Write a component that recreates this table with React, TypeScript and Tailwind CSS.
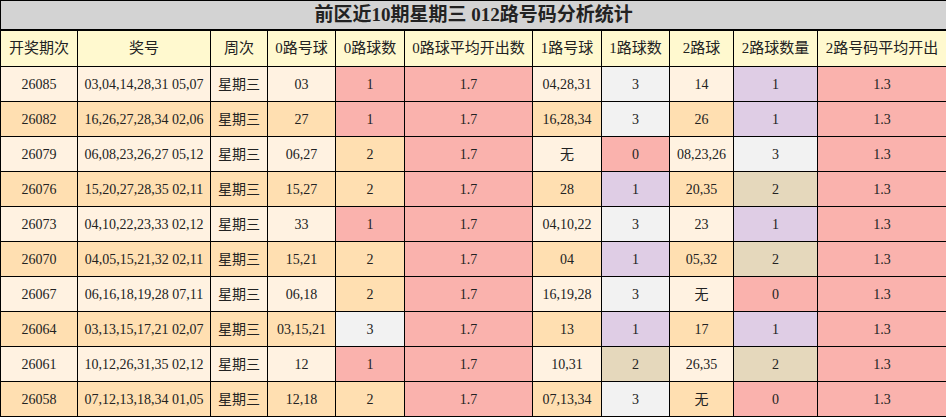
const rows: [string, string, string, number, string, number, string, number][] = [
  ["26085", "03,04,14,28,31 05,07", "03", 1, "04,28,31", 3, "14", 1],
  ["26082", "16,26,27,28,34 02,06", "27", 1, "16,28,34", 3, "26", 1],
  ["26079", "06,08,23,26,27 05,12", "06,27", 2, "无", 0, "08,23,26", 3],
  ["26076", "15,20,27,28,35 02,11", "15,27", 2, "28", 1, "20,35", 2],
  ["26073", "04,10,22,23,33 02,12", "33", 1, "04,10,22", 3, "23", 1],
  ["26070", "04,05,15,21,32 02,11", "15,21", 2, "04", 1, "05,32", 2],
  ["26067", "06,16,18,19,28 07,11", "06,18", 2, "16,19,28", 3, "无", 0],
  ["26064", "03,13,15,17,21 02,07", "03,15,21", 3, "13", 1, "17", 1],
  ["26061", "10,12,26,31,35 02,12", "12", 1, "10,31", 2, "26,35", 2],
  ["26058", "07,12,13,18,34 01,05", "12,18", 2, "07,13,34", 3, "无", 0],
];

const headers = [
  "开奖期次",
  "奖号",
  "周次",
  "0路号球",
  "0路球数",
  "0路球平均开出数",
  "1路号球",
  "1路球数",
  "2路球",
  "2路球数量",
  "2路号码平均开出",
];

const widths = [
  "w-[77px]",
  "w-[133px]",
  "w-[57px]",
  "w-[68px]",
  "w-[69px]",
  "w-[128px]",
  "w-[69px]",
  "w-[68px]",
  "w-[64px]",
  "w-[84px]",
  "w-[129px]",
];

// zero-road count colours differ from the 1/2 road ones
const zeroColor: Record<number, string> = {
  1: "bg-[#fab2ad]",
  2: "bg-[#ffdfb1]",
  3: "bg-[#f2f2f2]",
};

const countColor: Record<number, string> = {
  0: "bg-[#fab2ad]",
  1: "bg-[#dfcde5]",
  2: "bg-[#e5d8bc]",
  3: "bg-[#f2f2f2]",
};

const cell = "border border-black text-center align-middle p-0";

export default function App() {
  return (
    <div className="w-[946px] h-[417px] bg-white overflow-hidden">
      <table
        className="w-[946px] table-fixed border-collapse text-[#222]"
        style={{ fontFamily: '"Liberation Serif", "Noto Sans CJK SC", serif' }}
      >
        <colgroup>
          {widths.map((w, i) => (
            <col key={i} className={w} />
          ))}
        </colgroup>
        <thead>
          <tr className="h-[29px]">
            <th
              colSpan={11}
              className="border border-black border-b-2 bg-[#d3d3d3] text-[19px] font-bold text-center p-0 leading-none"
            >
              前区近10期星期三 012路号码分析统计
            </th>
          </tr>
          <tr className="h-[37px] bg-[#fff9cf]">
            {headers.map((h) => (
              <th key={h} className={`${cell} text-[15px] font-normal`}>
                {h}
              </th>
            ))}
          </tr>
        </thead>
        <tbody className="text-[14px]">
          {rows.map((r, i) => {
            const bg = i % 2 === 0 ? "bg-[#fff2e1]" : "bg-[#ffdfb1]";
            return (
              <tr key={r[0]} className="h-[35px]">
                <td className={`${cell} ${bg}`}>{r[0]}</td>
                <td className={`${cell} ${bg}`}>{r[1]}</td>
                <td className={`${cell} ${bg}`}>星期三</td>
                <td className={`${cell} ${bg}`}>{r[2]}</td>
                <td className={`${cell} ${zeroColor[r[3]]}`}>{r[3]}</td>
                <td className={`${cell} bg-[#fab2ad]`}>1.7</td>
                <td className={`${cell} ${bg}`}>{r[4]}</td>
                <td className={`${cell} ${countColor[r[5]]}`}>{r[5]}</td>
                <td className={`${cell} ${bg}`}>{r[6]}</td>
                <td className={`${cell} ${countColor[r[7]]}`}>{r[7]}</td>
                <td className={`${cell} bg-[#fab2ad]`}>1.3</td>
              </tr>
            );
          })}
        </tbody>
      </table>
    </div>
  );
}
